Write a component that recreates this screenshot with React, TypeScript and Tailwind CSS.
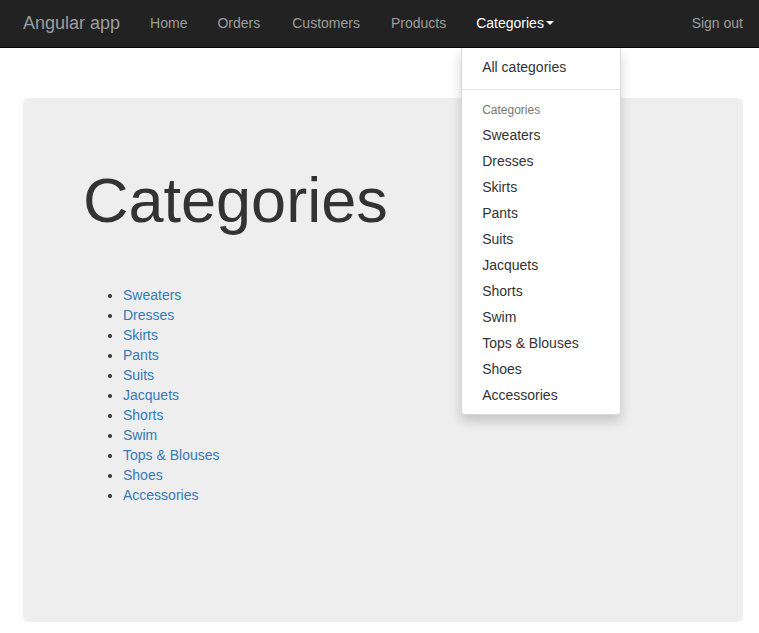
import { useState } from "react";

const categories = [
  "Sweaters",
  "Dresses",
  "Skirts",
  "Pants",
  "Suits",
  "Jacquets",
  "Shorts",
  "Swim",
  "Tops & Blouses",
  "Shoes",
  "Accessories",
];

const navLinks = [
  { label: "Home", className: "" },
  { label: "Orders", className: "" },
  { label: "Customers", className: "ml-[2px]" },
  { label: "Products", className: "ml-[1px]" },
];

export default function App() {
  const [isOpen, setIsOpen] = useState(true);

  return (
    <div className="min-h-screen bg-white text-[14px] leading-[20px] text-[#333] font-['Liberation_Sans',Arial,sans-serif]">
      <nav className="relative z-10 flex h-[48px] items-stretch border-b border-[#080808] bg-[#222] pb-[2px] pl-[8px] pr-[1px]">
        <a href="#" className="flex items-center px-[15px] text-[18px] text-[#9d9d9d]">
          Angular app
        </a>
        <ul className="flex">
          {navLinks.map((link) => (
            <li key={link.label} className={`flex ${link.className}`}>
              <a href="#" className="flex items-center px-[15px] text-[#9d9d9d] hover:text-white">
                {link.label}
              </a>
            </li>
          ))}
          <li className="relative flex">
            <a
              href="#"
              className="flex items-center px-[15px] text-white"
              onClick={(e) => {
                e.preventDefault();
                setIsOpen(!isOpen);
              }}
            >
              Categories
              <span className="ml-[2px] inline-block h-0 w-0 border-x-[4px] border-t-[4px] border-x-transparent border-t-white" />
            </a>
            {isOpen && (
              <ul className="absolute left-0 top-[48px] min-w-[160px] rounded-b-[4px] border border-t-0 border-[rgba(0,0,0,0.15)] bg-white py-[6px] shadow-[0_6px_12px_rgba(0,0,0,0.175)]">
                <li>
                  <a href="#" className="block px-[20px] py-[3px] whitespace-nowrap text-[#333] hover:bg-[#f5f5f5]">
                    All categories
                  </a>
                </li>
                <li className="my-[9px] h-px bg-[#e5e5e5]" />
                <li className="px-[20px] py-[3px] text-[12px] leading-[17px] text-[#777]">Categories</li>
                {categories.map((c) => (
                  <li key={c}>
                    <a href="#" className="block px-[20px] py-[3px] whitespace-nowrap text-[#333] hover:bg-[#f5f5f5]">
                      {c}
                    </a>
                  </li>
                ))}
              </ul>
            )}
          </li>
        </ul>
        <ul className="ml-auto flex">
          <li className="flex">
            <a href="#" className="flex items-center px-[15px] text-[#9d9d9d]">
              Sign out
            </a>
          </li>
        </ul>
      </nav>

      <div className="ml-[23px] mt-[50px] h-[524px] w-[720px] rounded-[6px] bg-[#eee] px-[60px] pt-[48px]">
        <h1 className="mt-[20px] mb-[10px] text-[63px] leading-[1.1] font-normal text-[#333]">Categories</h1>
        <ul className="mt-[50px] list-disc pl-[40px]">
          {categories.map((c) => (
            <li key={c}>
              <a href="#" className="text-[#337ab7] hover:underline">
                {c}
              </a>
            </li>
          ))}
        </ul>
      </div>
    </div>
  );
}
